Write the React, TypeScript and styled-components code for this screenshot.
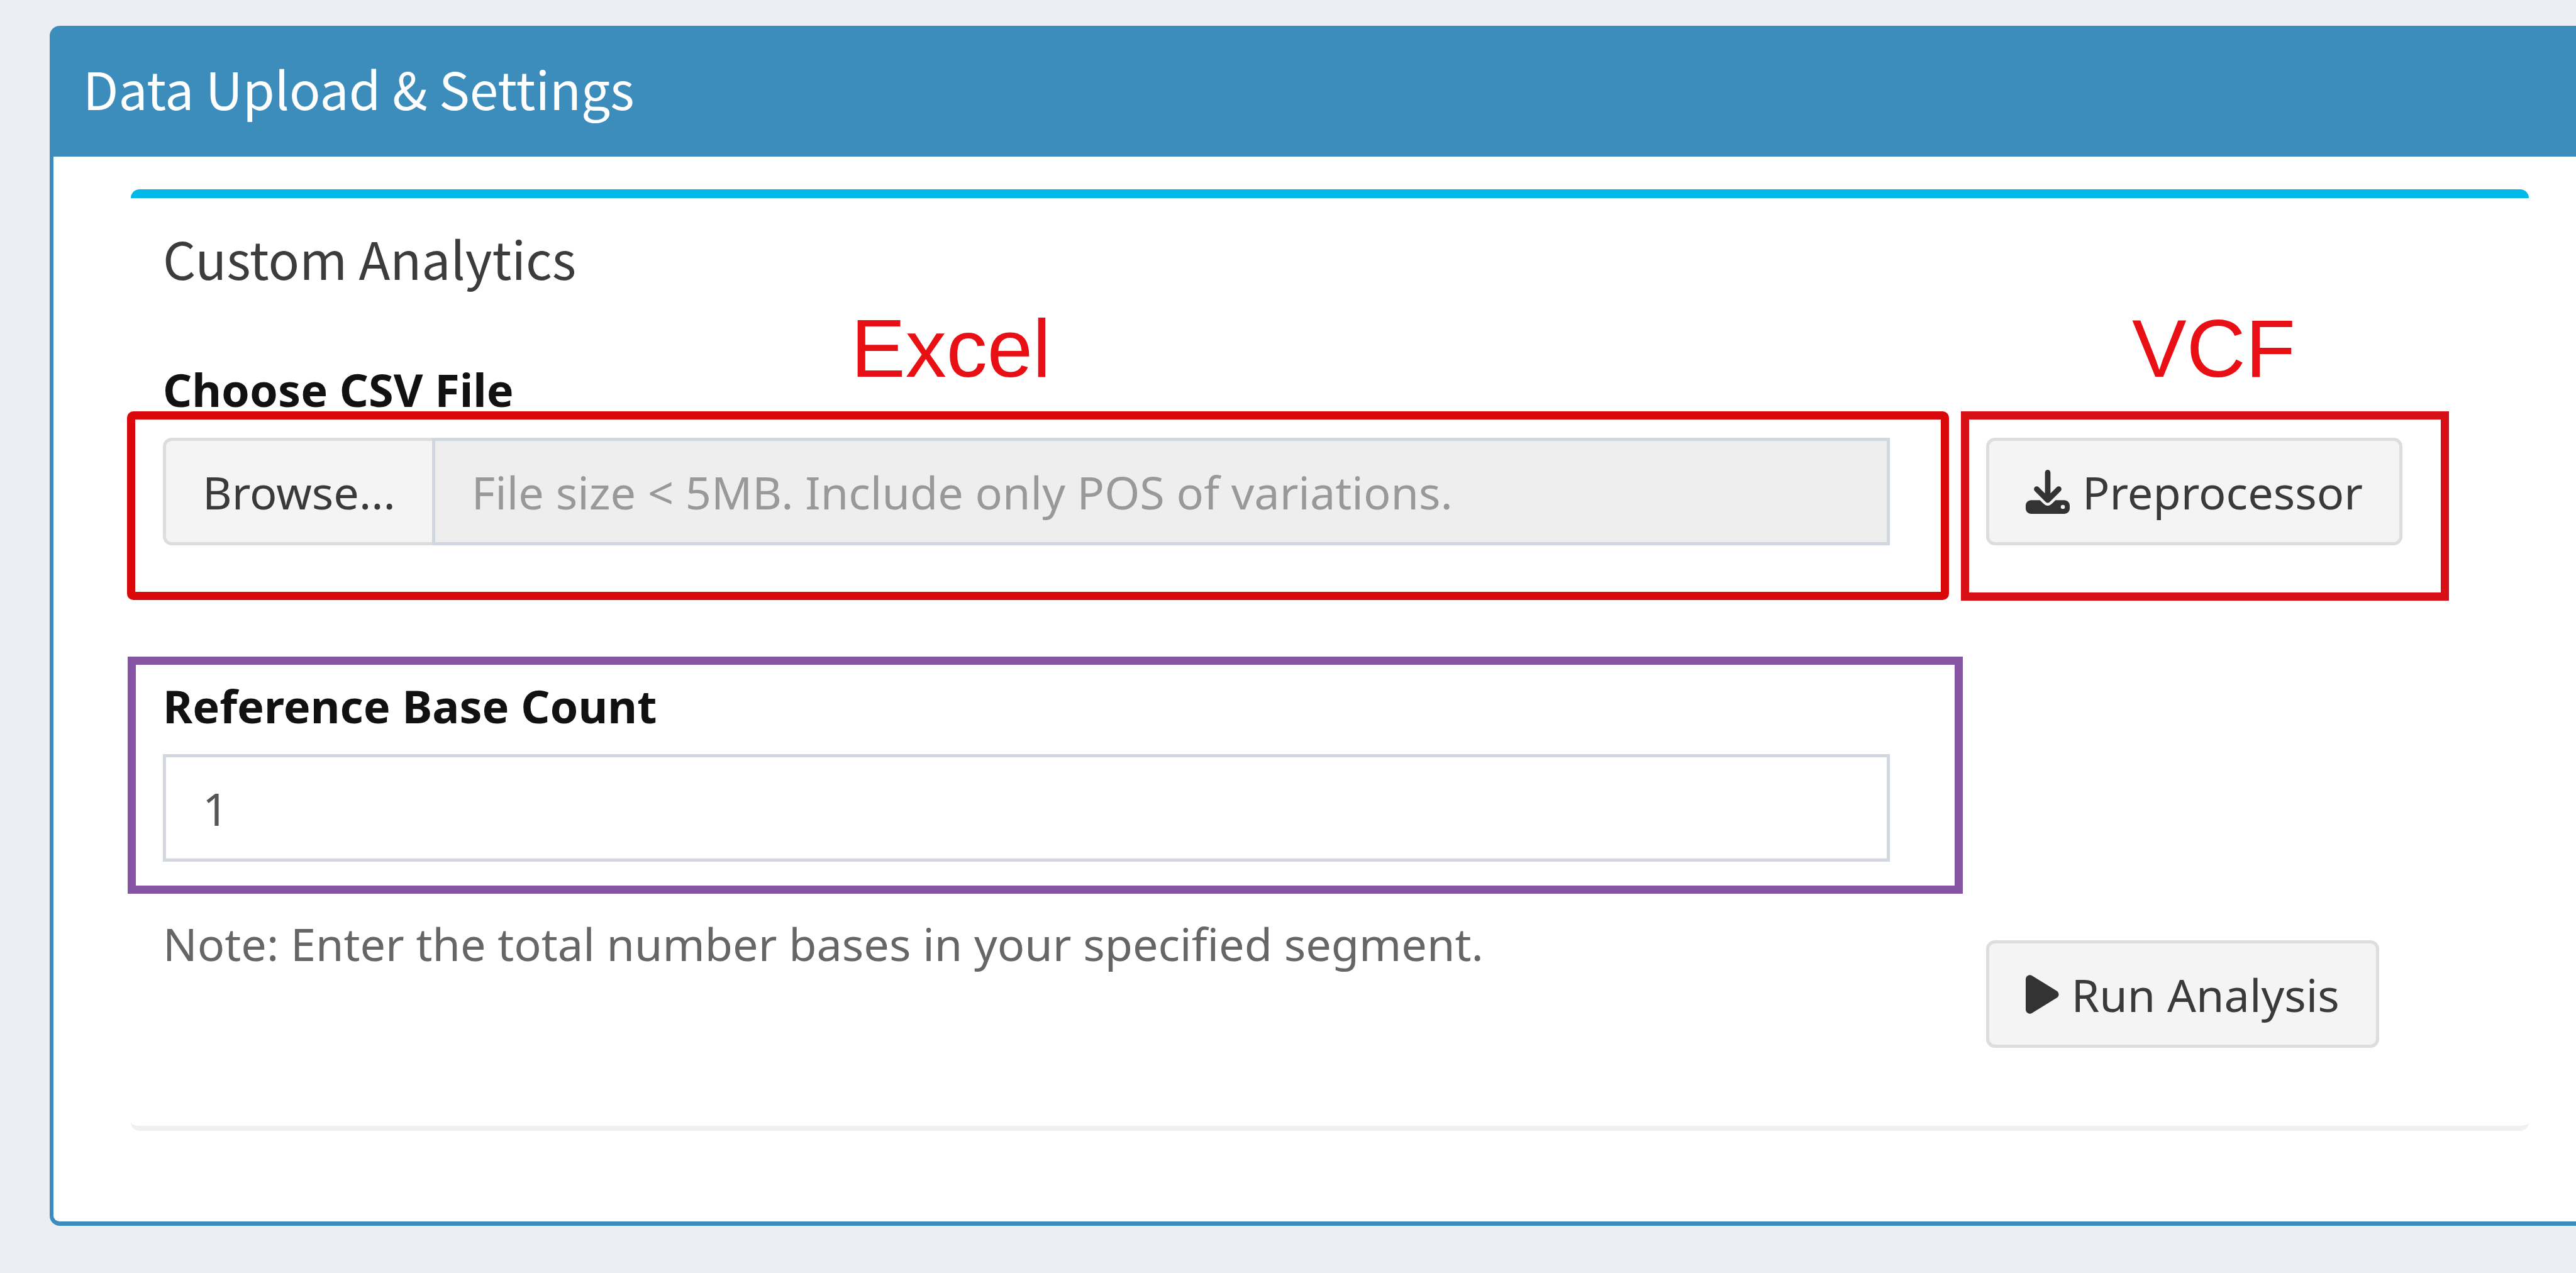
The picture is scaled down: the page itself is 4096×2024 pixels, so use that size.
import React, { useRef, useState } from 'react';
import styled, { createGlobalStyle } from 'styled-components';
import { FaDownload } from 'react-icons/fa6';

const headingFont = '"Noto Sans CJK SC", "Noto Sans", sans-serif';
const bodyFont = '"Noto Sans", "Open Sans", sans-serif';
const annotationFont = '"Liberation Sans", Arial, sans-serif';

const GlobalStyle = createGlobalStyle`
  *, *::before, *::after { box-sizing: border-box; }
  body {
    margin: 0;
    background: #edeef4;
    color: #333;
    font-family: ${bodyFont};
    font-size: 72px;
    line-height: 100px;
  }
`;

const Page = styled.main`
  min-height: 100vh;
  padding: 41px 0 75px 79px;
  overflow: hidden;
`;

const Card = styled.section`
  background: #fff;
  border: 6px solid #3c8dbc;
  border-width: 0 0 7px 6px;
  border-radius: 16px 0 0 16px;
`;

const CardHeader = styled.header`
  padding: 49px 47px 59px;
  background: #3c8dbc;
  border-top-left-radius: 10px;
`;

const Title = styled.h1`
  margin: 0;
  color: #fff;
  font: 400 82px/100px ${headingFont};
`;

const CardBody = styled.div`
  padding: 52px 75px 144px 123px;
`;

const Box = styled.section`
  padding: 45px 51px 124px;
  border-top: 14px solid #00b9e8;
  border-bottom: 8px solid #f0f0f0;
  border-radius: 14px;
`;

const BoxTitle = styled.h2`
  margin: 0 0 109px;
  color: #3c3c3c;
  font: 400 82px/100px ${headingFont};
`;

const Form = styled.form`
  display: grid;
  grid-template-columns: minmax(0, 1fr) 812px;
  gap: 205px 153px;
  align-items: end;
  justify-items: start;
`;

const Column = styled.div`
  width: 100%;
`;

const NotedColumn = styled(Column)`
  padding-bottom: 116px;
`;

const Anchor = styled.div`
  position: relative;
`;

const Label = styled.label`
  display: block;
  margin-bottom: 27px;
  color: #111;
  font-weight: 700;
`;

const InputGroup = styled.div`
  display: flex;
`;

const Button = styled.button<{ $joined?: boolean }>`
  display: flex;
  align-items: center;
  gap: 20px;
  height: 171px;
  padding: 0 58px;
  color: #3a3a3a;
  background: #f4f4f4;
  border: 5px solid #ddd;
  border-right-width: ${({ $joined }) => ($joined ? 0 : 5)}px;
  border-radius: ${({ $joined }) => ($joined ? '14px 0 0 14px' : '14px')};
  font: inherit;
  white-space: nowrap;
  cursor: pointer;

  svg {
    width: auto;
    height: 70px;
    color: #333;
  }
`;

const TextInput = styled.input`
  display: block;
  flex: 1;
  width: 100%;
  min-width: 0;
  height: 171px;
  padding: 0 58px;
  color: #555;
  background: #fff;
  border: 5px solid #d2d6de;
  border-radius: 0;
  font: inherit;
  appearance: textfield;

  &:read-only { background: #eee; }
  &::placeholder { color: #999; opacity: 1; }
`;

const Note = styled.p`
  margin: 80px 0 0;
  color: #666;
`;

const Frame = styled.div<{ $inset: string; $color: string; $radius?: number }>`
  position: absolute;
  inset: ${({ $inset }) => $inset};
  border: 13px solid ${({ $color }) => $color};
  border-radius: ${({ $radius = 0 }) => $radius}px;
  pointer-events: none;
`;

const FrameCaption = styled.span<{ $left: number }>`
  position: absolute;
  bottom: 100%;
  left: ${({ $left }) => $left}px;
  margin-bottom: 38px;
  color: #e81014;
  font: 400 130px/150px ${annotationFont};
`;

function PlayIcon() {
  return (
    <svg viewBox="0 0 384 512" fill="currentColor" aria-hidden="true">
      <path d="M73 39c-14.8-9.1-33.4-9.4-48.5-.9S0 62.6 0 80V432c0 17.4 9.4 33.4 24.5 41.9s33.7 8.1 48.5-.9L361 297c14.3-8.7 23-24.2 23-41s-8.7-32.2-23-41L73 39z" />
    </svg>
  );
}

export default function App() {
  const picker = useRef<HTMLInputElement>(null);
  const [fileName, setFileName] = useState('');
  const [count, setCount] = useState('1');

  return (
    <>
      <GlobalStyle />
      <Page>
        <Card>
          <CardHeader>
            <Title>Data Upload &amp; Settings</Title>
          </CardHeader>
          <CardBody>
            <Box>
              <BoxTitle>Custom Analytics</BoxTitle>
              <Form onSubmit={(event) => event.preventDefault()}>
                <Column>
                  <Label htmlFor="csv-name">Choose CSV File</Label>
                  <Anchor>
                    <InputGroup>
                      <Button type="button" $joined onClick={() => picker.current?.click()}>
                        Browse...
                      </Button>
                      <TextInput
                        id="csv-name"
                        type="text"
                        readOnly
                        value={fileName}
                        placeholder="File size < 5MB. Include only POS of variations."
                      />
                      <input
                        ref={picker}
                        type="file"
                        accept=".csv"
                        hidden
                        onChange={(event) => setFileName(event.target.files?.[0]?.name ?? '')}
                      />
                    </InputGroup>
                    <Frame $inset="-42px -94px -87px -57px" $color="#da070b" $radius={10}>
                      <FrameCaption $left={1138}>Excel</FrameCaption>
                    </Frame>
                  </Anchor>
                </Column>
                <Anchor>
                  <Button type="button">
                    <FaDownload aria-hidden />
                    Preprocessor
                  </Button>
                  <Frame $inset="-42px -74px -88px -40px" $color="#d61014">
                    <FrameCaption $left={259}>VCF</FrameCaption>
                  </Frame>
                </Anchor>
                <NotedColumn>
                  <Anchor>
                    <Label htmlFor="base-count">Reference Base Count</Label>
                    <TextInput
                      id="base-count"
                      type="number"
                      value={count}
                      onChange={(event) => setCount(event.target.value)}
                    />
                    <Frame $inset="-28px -116px -51px -56px" $color="#8555a3" />
                  </Anchor>
                  <Note>Note: Enter the total number bases in your specified segment.</Note>
                </NotedColumn>
                <Button type="submit">
                  <PlayIcon />
                  Run Analysis
                </Button>
              </Form>
            </Box>
          </CardBody>
        </Card>
      </Page>
    </>
  );
}
